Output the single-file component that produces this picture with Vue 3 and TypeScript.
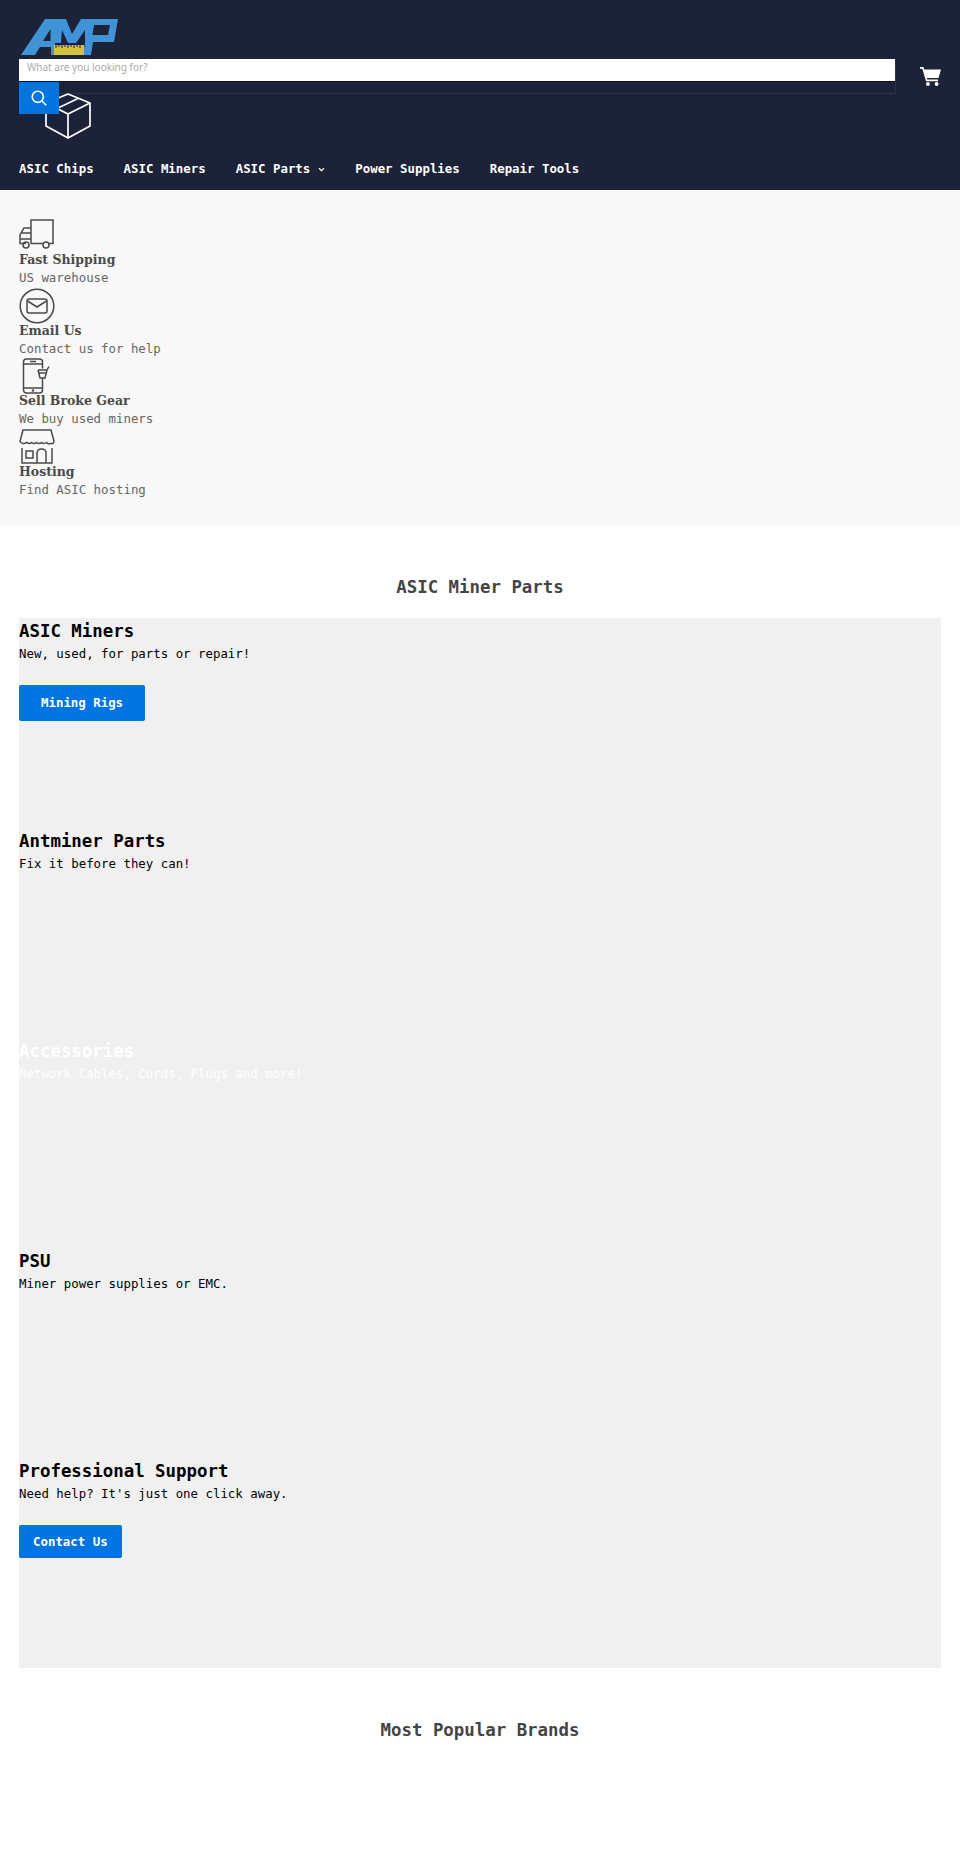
<template>
  <div class="page">
    <header class="site-header">
      <div class="header-main">
        <div class="header-left">
          <svg class="logo" viewBox="0 0 97 37" width="97" height="37">
            <path d="M0 37 L24 1 H36 L33 37 H30 V29 H19 L14 37 Z M22 23 H29.500 V11 Z" fill="#3f93d6" fill-rule="evenodd" />
            <path d="M34 1 H45 L51 16 L60 1 H97 L93 24 H72 L70 37 H62 L64 25 V12 L55 25 H47 L41 12 L40 25 H34 Z M73 7 L71.500 17 H87 L89 7 Z" fill="#3f93d6" fill-rule="evenodd" />
            <rect x="33" y="27" width="30" height="10" fill="#d3c33e" />
            <path d="M35 26v4M38 26v3M41 26v4M44 26v3M47 26v4M50 26v3M53 26v4M56 26v3M59 26v4" stroke="#1c2237" stroke-width="1" />
          </svg>
          <form class="search" @submit.prevent>
            <div class="search-field">
              <input class="search-input" type="text" v-model="query" placeholder="What are you looking for?" />
            </div>
            <button class="search-btn" type="submit" aria-label="Search">
              <svg viewBox="0 0 20 20" width="16" height="16" fill="none" stroke="#fff" stroke-width="2">
                <circle cx="8.500" cy="8.500" r="7" />
                <path d="M13.500 13.500l5.500 5.500" />
              </svg>
            </button>
          </form>
          <svg class="box-icon" viewBox="0 0 46 46" width="46" height="46" fill="none" stroke="#fff" stroke-width="1.700" stroke-linejoin="round">
            <path d="M23 1 L45 10 V33 L23 45 L1 33 V10 Z" />
            <path d="M1 10 L23 21 L45 10 M23 21 V45 M12 15.500 L34 5" />
          </svg>
        </div>
        <svg class="cart" viewBox="0 0 22 22" width="22" height="22">
          <path fill="#fff" d="M0 1.500h3.600l.8 2.700H22l-2.600 9H7.300l.4 1.500h11.200v1.800H6.300L2.400 3.300H0z" />
          <circle cx="8.300" cy="19.400" r="2" fill="#fff" />
          <circle cx="17.400" cy="19.400" r="2" fill="#fff" />
        </svg>
      </div>
      <nav class="main-nav">
        <a v-for="item in navItems" :key="item.label" class="nav-link">
          {{ item.label }}
          <svg v-if="item.caret" class="caret" viewBox="0 0 8 6" width="7" height="5" fill="none" stroke="#fff" stroke-width="1.400"><path d="M1 1.500l3 3 3-3" /></svg>
        </a>
      </nav>
    </header>

    <section class="features">
      <div class="feature">
        <svg class="feature-icon" viewBox="0 0 36 36" width="36" height="36" fill="none" stroke="#4a4a4a" stroke-width="1.500">
          <path d="M12 27 V3 H34 V26.500 H30 M24 26.500 H12 M7 26.500 H1 V18 L5 11 H12 M3 16 H12 M1 22 H12" />
          <circle cx="7" cy="28" r="3" /><circle cx="27" cy="28" r="3" />
        </svg>
        <h3>Fast Shipping</h3>
        <p>US warehouse</p>
      </div>
      <div class="feature">
        <svg class="feature-icon" viewBox="0 0 36 36" width="36" height="36" fill="none" stroke="#4a4a4a" stroke-width="1.500">
          <circle cx="18" cy="18" r="16.800" />
          <rect x="8" y="11" width="20" height="14" rx="2" />
          <path d="M8.500 13l9.500 6 9.500-6" />
        </svg>
        <h3>Email Us</h3>
        <p>Contact us for help</p>
      </div>
      <div class="feature">
        <svg class="feature-icon" viewBox="0 0 36 36" width="36" height="36" fill="none" stroke="#4a4a4a" stroke-width="1.500">
          <rect x="4.500" y="1" width="19" height="34" rx="3" />
          <path d="M4.500 6h19M4.500 30h19M11 3.500h6" />
          <circle cx="14" cy="32.500" r=".6" />
          <path d="M19 12h9l2-3.500M19 12l2 8h5l2-8M20 15h8" fill="#f8f8f8" />
        </svg>
        <h3>Sell Broke Gear</h3>
        <p>We buy used miners</p>
      </div>
      <div class="feature">
        <svg class="feature-icon" viewBox="0 0 36 36" width="36" height="36" fill="none" stroke="#4a4a4a" stroke-width="1.500">
          <path d="M4 1h28l3 11q0 3-3 2.500q-3 1-4.500-1q-3 2-5 0q-2.500 2-5 0q-2.500 2-5 0q-2 2-4.500 0Q3 16 1 12.500Z" />
          <path d="M3 19v15h30V19" />
          <rect x="7" y="22" width="7" height="7" />
          <path d="M18 34V24q0-4 4.500-4t4.500 4v10" />
        </svg>
        <h3>Hosting</h3>
        <p>Find ASIC hosting</p>
      </div>
    </section>

    <h2 class="section-title first">ASIC Miner Parts</h2>
    <section class="panel">
      <article v-for="card in cards" :key="card.title" class="card" :class="{ light: card.light }">
        <h3>{{ card.title }}</h3>
        <p>{{ card.text }}</p>
        <a v-if="card.button" class="btn" :class="{ wide: card.wide }">{{ card.button }}</a>
      </article>
    </section>

    <h2 class="section-title brands">Most Popular Brands</h2>
  </div>
</template>

<script setup lang="ts">
import { ref } from 'vue'

interface Card {
  title: string
  text: string
  button?: string
  wide?: boolean
  light?: boolean
}

const query = ref('')

const navItems = [
  { label: 'ASIC Chips' },
  { label: 'ASIC Miners' },
  { label: 'ASIC Parts', caret: true },
  { label: 'Power Supplies' },
  { label: 'Repair Tools' }
]

const cards: Card[] = [
  { title: 'ASIC Miners', text: 'New, used, for parts or repair!', button: 'Mining Rigs', wide: true },
  { title: 'Antminer Parts', text: 'Fix it before they can!' },
  { title: 'Accessories', text: 'Network Cables, Cords, Plugs and more!', light: true },
  { title: 'PSU', text: 'Miner power supplies or EMC.' },
  { title: 'Professional Support', text: "Need help? It's just one click away.", button: 'Contact Us' }
]
</script>

<style>
body {
  background: #fff;
}
</style>

<style scoped>
.page {
  height: 1875px;
  overflow: hidden;
  font-family: "DejaVu Sans Mono", "Liberation Mono", monospace;
  color: #000;
}

.site-header {
  height: 190px;
  box-sizing: border-box;
  background: #1c2237;
  padding: 18px 19px 0;
}

.header-main {
  display: flex;
  height: 129px;
}

.header-left {
  flex: none;
  width: 877px;
}

.logo {
  display: block;
  margin-left: 2px;
}

.search {
  margin-top: 4px;
}

.search-field {
  height: 35px;
  border-bottom: 1px solid #2b3147;
  border-right: 1px solid #2b3147;
  box-sizing: border-box;
}

.search-input {
  display: block;
  width: 100%;
  height: 23px;
  box-sizing: border-box;
  border: 0;
  border-bottom: 1px solid #111;
  padding: 0 8px 6px;
  background: #fff;
  font: 10px "Noto Sans", sans-serif;
  outline: none;
}

.search-input::placeholder {
  color: #aaa;
}

.search-btn {
  display: flex;
  align-items: center;
  justify-content: center;
  position: relative;
  z-index: 1;
  width: 40px;
  height: 32px;
  margin-top: -12px;
  border: 0;
  padding: 0;
  background: #0074e0;
}

.box-icon {
  display: block;
  margin: -21px 0 0 26px;
}

.cart {
  margin: 47px 0 0 24px;
}

.main-nav {
  display: flex;
  gap: 30px;
}

.nav-link {
  display: flex;
  align-items: center;
  gap: 8px;
  color: #fff;
  font-size: 12.400px;
  font-weight: 700;
  line-height: 44px;
}

.features {
  height: 335px;
  box-sizing: border-box;
  padding-top: 27px;
  background: #f8f8f8;
  padding-left: 19px;
}

.feature {
  height: 70.500px;
}

.feature-icon {
  display: block;
}

.feature h3 {
  margin: -2px 0 0;
  font: 700 12.500px/17px "DejaVu Serif", serif;
  color: #4a4a4a;
}

.feature p {
  margin: 1px 0 0;
  font-size: 12.400px;
  line-height: 17.500px;
  color: #666;
}

.section-title {
  margin: 0;
  text-align: center;
  font-size: 17.400px;
  font-weight: 700;
  color: #444;
  line-height: 24px;
}

.section-title.first {
  padding-top: 50px;
  height: 93px;
  box-sizing: border-box;
}

.section-title.brands {
  padding-top: 50px;
}

.panel {
  margin: 0 19px;
  background: #f0f0f0;
}

.card {
  height: 210px;
}

.card h3 {
  margin: 0;
  padding-top: 1px;
  font-size: 17.400px;
  line-height: 24px;
  font-weight: 700;
}

.card p {
  margin: 0;
  font-size: 12.400px;
  line-height: 21px;
}

.card.light h3,
.card.light p {
  color: #fff;
}

.btn {
  display: inline-block;
  margin-top: 21px;
  padding: 0 14px;
  height: 33px;
  line-height: 33px;
  background: #0074e0;
  border-radius: 2px;
  color: #fff;
  font-size: 12.400px;
  font-weight: 700;
}

.btn.wide {
  padding: 0 22px;
  height: 36px;
  line-height: 36px;
}
</style>
